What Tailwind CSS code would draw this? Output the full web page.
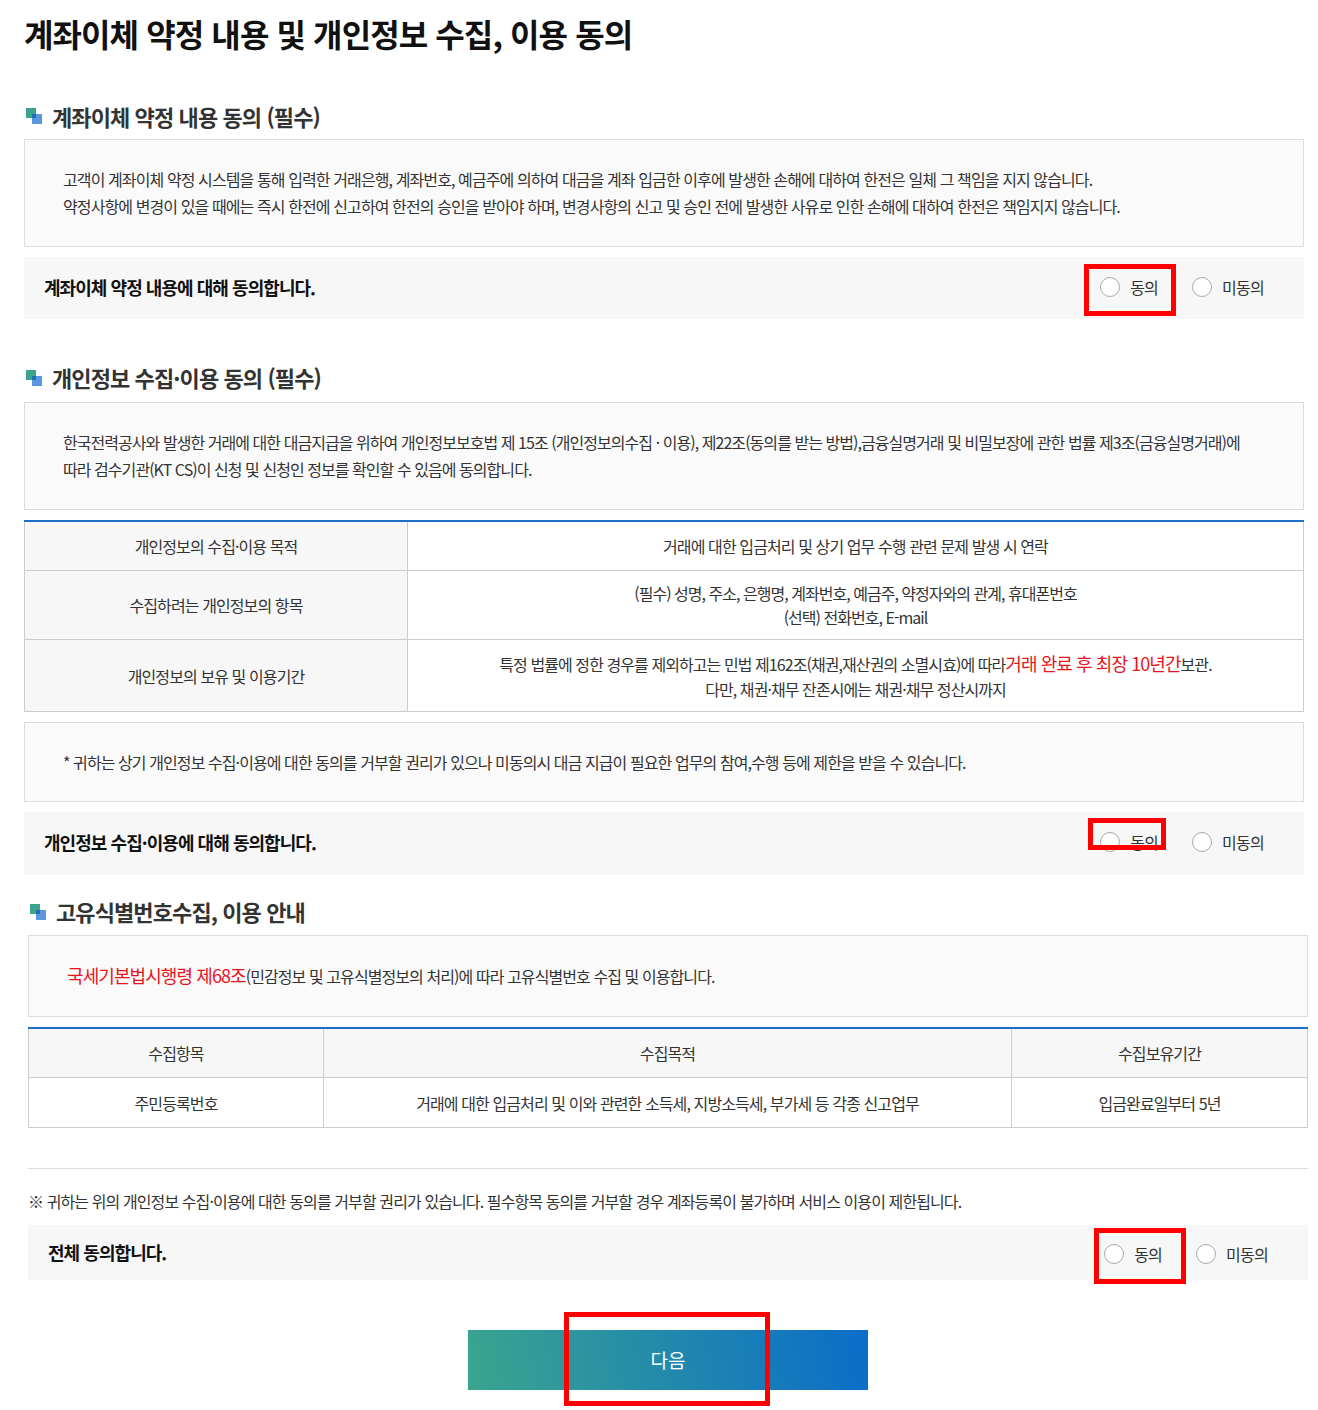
<!DOCTYPE html>
<html lang="ko">

<head>
  <meta charset="UTF-8" />
  <title>계좌이체 약정</title>
  <script src="https://cdn.jsdelivr.net/npm/@tailwindcss/browser@4"></script>
</head>

<body class="bg-white text-[#333] font-['Noto_Sans_CJK_KR','Noto_Sans',sans-serif]">
  <div class="relative w-[1318px] h-[1410px] overflow-hidden">
    <div class="pl-6 w-[1304px]">
      <h1 class="h-[70px] leading-[66px] text-[32px] font-bold text-[#111] tracking-[-0.9px]">계좌이체 약정 내용 및 개인정보 수집, 이용 동의</h1>

      <!-- 계좌이체 -->
      <div class="mt-[25px] h-[44px] flex items-center gap-[10px]">
        <svg width="16" height="16" viewBox="0 0 16 16" class="shrink-0 ml-[2px] -mt-[2px]"><rect x="0" y="0" width="10" height="10" fill="#3aa58e"/><rect x="6" y="6" width="10" height="10" fill="#5b97dd"/><rect x="6" y="6" width="4" height="4" fill="#1f6fb5"/></svg>
        <h2 class="pb-[2px] text-[22px] font-bold text-[#333] tracking-[-0.9px]">계좌이체 약정 내용 동의 (필수)</h2>
      </div>
      <div class="h-[108px] border border-[#ddd] bg-[#fafafa] pl-[38px] pt-[26px] text-[16px] leading-[27px] tracking-[-0.9px]">
        <p>고객이 계좌이체 약정 시스템을 통해 입력한 거래은행, 계좌번호, 예금주에 의하여 대금을 계좌 입금한 이후에 발생한 손해에 대하여 한전은 일체 그 책임을 지지 않습니다.</p>
        <p>약정사항에 변경이 있을 때에는 즉시 한전에 신고하여 한전의 승인을 받아야 하며, 변경사항의 신고 및 승인 전에 발생한 사유로 인한 손해에 대하여 한전은 책임지지 않습니다.</p>
      </div>
      <div class="mt-[10px] h-[62px] bg-[#f7f7f7] flex items-center justify-between pl-5 pr-10">
        <strong class="pb-[2px] text-[18px] font-bold text-[#111] tracking-[-0.95px]">계좌이체 약정 내용에 대해 동의합니다.</strong>
        <div class="pb-[2px] flex items-center text-[16px] tracking-[-0.75px]">
          <span class="w-5 h-5 rounded-full border border-[#aaa] bg-white"></span><span class="ml-[10px]">동의</span>
          <span class="ml-[34px] w-5 h-5 rounded-full border border-[#aaa] bg-white"></span><span class="ml-[10px]">미동의</span>
        </div>
      </div>

      <!-- 개인정보 -->
      <div class="mt-[37px] h-[46px] flex items-center gap-[10px]">
        <svg width="16" height="16" viewBox="0 0 16 16" class="shrink-0 ml-[2px] -mt-[2px]"><rect x="0" y="0" width="10" height="10" fill="#3aa58e"/><rect x="6" y="6" width="10" height="10" fill="#5b97dd"/><rect x="6" y="6" width="4" height="4" fill="#1f6fb5"/></svg>
        <h2 class="pb-[4px] text-[22px] font-bold text-[#333] tracking-[-0.9px]">개인정보 수집·이용 동의 (필수)</h2>
      </div>
      <div class="h-[108px] border border-[#ddd] bg-[#fafafa] pl-[38px] pt-[26px] text-[16px] leading-[27px] tracking-[-0.95px]">
        <p>한국전력공사와 발생한 거래에 대한 대금지급을 위하여 개인정보보호법 제 15조 (개인정보의수집 · 이용), 제22조(동의를 받는 방법),금융실명거래 및 비밀보장에 관한 법률 제3조(금융실명거래)에</p>
        <p>따라 검수기관(KT CS)이 신청 및 신청인 정보를 확인할 수 있음에 동의합니다.</p>
      </div>
      <div class="mt-[10px] border-t-2 border-[#1f6fc9] text-[16px] tracking-[-0.9px] text-center">
        <div class="grid grid-cols-[384px_1fr] h-[49px] border-b border-[#ccc]">
          <div class="bg-[#f7f7f7] border-x border-[#ccc] flex items-center justify-center">개인정보의 수집·이용 목적</div>
          <div class="border-r border-[#ccc] flex items-center justify-center">거래에 대한 입금처리 및 상기 업무 수행 관련 문제 발생 시 연락</div>
        </div>
        <div class="grid grid-cols-[384px_1fr] h-[69px] border-b border-[#ccc]">
          <div class="bg-[#f7f7f7] border-x border-[#ccc] flex items-center justify-center">수집하려는 개인정보의 항목</div>
          <div class="border-r border-[#ccc] flex flex-col items-center justify-center leading-[24px] tracking-[-0.98px]">
            <p>(필수) 성명, 주소, 은행명, 계좌번호, 예금주, 약정자와의 관계, 휴대폰번호</p>
            <p>(선택) 전화번호, E-mail</p>
          </div>
        </div>
        <div class="grid grid-cols-[384px_1fr] h-[72px] border-b border-[#ccc]">
          <div class="bg-[#f7f7f7] border-x border-[#ccc] flex items-center justify-center">개인정보의 보유 및 이용기간</div>
          <div class="border-r border-[#ccc] flex flex-col items-center justify-center pt-[1px] leading-[25px] tracking-[-0.93px]">
            <p>특정 법률에 정한 경우를 제외하고는 민법 제162조(채권,재산권의 소멸시효)에 따라<span class="text-[#e8141c] text-[18px]">거래 완료 후 최장 10년간</span>보관.</p>
            <p>다만, 채권·채무 잔존시에는 채권·채무 정산시까지</p>
          </div>
        </div>
      </div>
      <div class="mt-[10px] h-[80px] border border-[#ddd] bg-[#fafafa] pl-[38px] flex items-center text-[16px] tracking-[-0.92px]">
        <p>* 귀하는 상기 개인정보 수집·이용에 대한 동의를 거부할 권리가 있으나 미동의시 대금 지급이 필요한 업무의 참여,수행 등에 제한을 받을 수 있습니다.</p>
      </div>
      <div class="mt-[10px] h-[63px] bg-[#f7f7f7] flex items-center justify-between pl-5 pr-10">
        <strong class="pb-[2px] text-[18px] font-bold text-[#111] tracking-[-0.95px]">개인정보 수집·이용에 대해 동의합니다.</strong>
        <div class="pb-[4px] flex items-center text-[16px] tracking-[-0.75px]">
          <span class="w-5 h-5 rounded-full border border-[#aaa] bg-white"></span><span class="ml-[10px]">동의</span>
          <span class="ml-[34px] w-5 h-5 rounded-full border border-[#aaa] bg-white"></span><span class="ml-[10px]">미동의</span>
        </div>
      </div>
    </div>

    <div class="pl-7 w-[1308px]">
      <!-- 고유식별번호 -->
      <div class="mt-[16px] h-[44px] flex items-center gap-[10px]">
        <svg width="16" height="16" viewBox="0 0 16 16" class="shrink-0 ml-[2px] -mt-[2px]"><rect x="0" y="0" width="10" height="10" fill="#3aa58e"/><rect x="6" y="6" width="10" height="10" fill="#5b97dd"/><rect x="6" y="6" width="4" height="4" fill="#1f6fb5"/></svg>
        <h2 class="pb-[4px] text-[22px] font-bold text-[#333] tracking-[-0.9px]">고유식별번호수집, 이용 안내</h2>
      </div>
      <div class="h-[82px] border border-[#ddd] bg-[#fafafa] pl-[38px] pb-[2px] flex items-center text-[16px] tracking-[-0.92px]">
        <p><span class="text-[#e8141c] text-[18px]">국세기본법시행령 제68조</span>(민감정보 및 고유식별정보의 처리)에 따라 고유식별번호 수집 및 이용합니다.</p>
      </div>
      <div class="mt-[10px] border-t-2 border-[#1f6fc9] text-[16px] tracking-[-0.9px] text-center">
        <div class="grid grid-cols-[296px_688px_1fr] h-[49px] border-b border-[#ccc] bg-[#f7f7f7]">
          <div class="border-x border-[#ccc] flex items-center justify-center">수집항목</div>
          <div class="border-r border-[#ccc] flex items-center justify-center">수집목적</div>
          <div class="border-r border-[#ccc] flex items-center justify-center">수집보유기간</div>
        </div>
        <div class="grid grid-cols-[296px_688px_1fr] h-[50px] border-b border-[#ccc]">
          <div class="border-x border-[#ccc] flex items-center justify-center">주민등록번호</div>
          <div class="border-r border-[#ccc] flex items-center justify-center">거래에 대한 입금처리 및 이와 관련한 소득세, 지방소득세, 부가세 등 각종 신고업무</div>
          <div class="border-r border-[#ccc] flex items-center justify-center">입금완료일부터 5년</div>
        </div>
      </div>
      <div class="mt-10 border-t border-[#ddd] h-[57px] pt-[7px] flex items-center text-[16px] tracking-[-0.9px]">
        <p>※ 귀하는 위의 개인정보 수집·이용에 대한 동의를 거부할 권리가 있습니다. 필수항목 동의를 거부할 경우 계좌등록이 불가하며 서비스 이용이 제한됩니다.</p>
      </div>
      <div class="h-[55px] bg-[#f7f7f7] flex items-center justify-between pl-5 pr-10">
        <strong class="text-[18px] font-bold text-[#111] tracking-[-0.95px]">전체 동의합니다.</strong>
        <div class="pt-[3px] flex items-center text-[16px] tracking-[-0.75px]">
          <span class="w-5 h-5 rounded-full border border-[#aaa] bg-white"></span><span class="ml-[10px]">동의</span>
          <span class="ml-[34px] w-5 h-5 rounded-full border border-[#aaa] bg-white"></span><span class="ml-[10px]">미동의</span>
        </div>
      </div>
      <div class="mt-[50px] ml-[440px] w-[400px] h-[60px] bg-linear-[80deg] from-[#3aa58e] to-[#0a6dca] flex items-center justify-center text-white text-[19px]">다음</div>
    </div>

    <!-- red annotation boxes -->
    <div class="absolute left-[1084px] top-[264px] w-[92px] h-[52px] border-[5px] border-[#ff0000]"></div>
    <div class="absolute left-[1088px] top-[818px] w-[78px] h-[32px] border-[5px] border-[#ff0000]"></div>
    <div class="absolute left-[1094px] top-[1228px] w-[92px] h-[56px] border-[5px] border-[#ff0000]"></div>
    <div class="absolute left-[564px] top-[1312px] w-[206px] h-[94px] border-[5px] border-[#ff0000]"></div>
  </div>
</body>

</html>
